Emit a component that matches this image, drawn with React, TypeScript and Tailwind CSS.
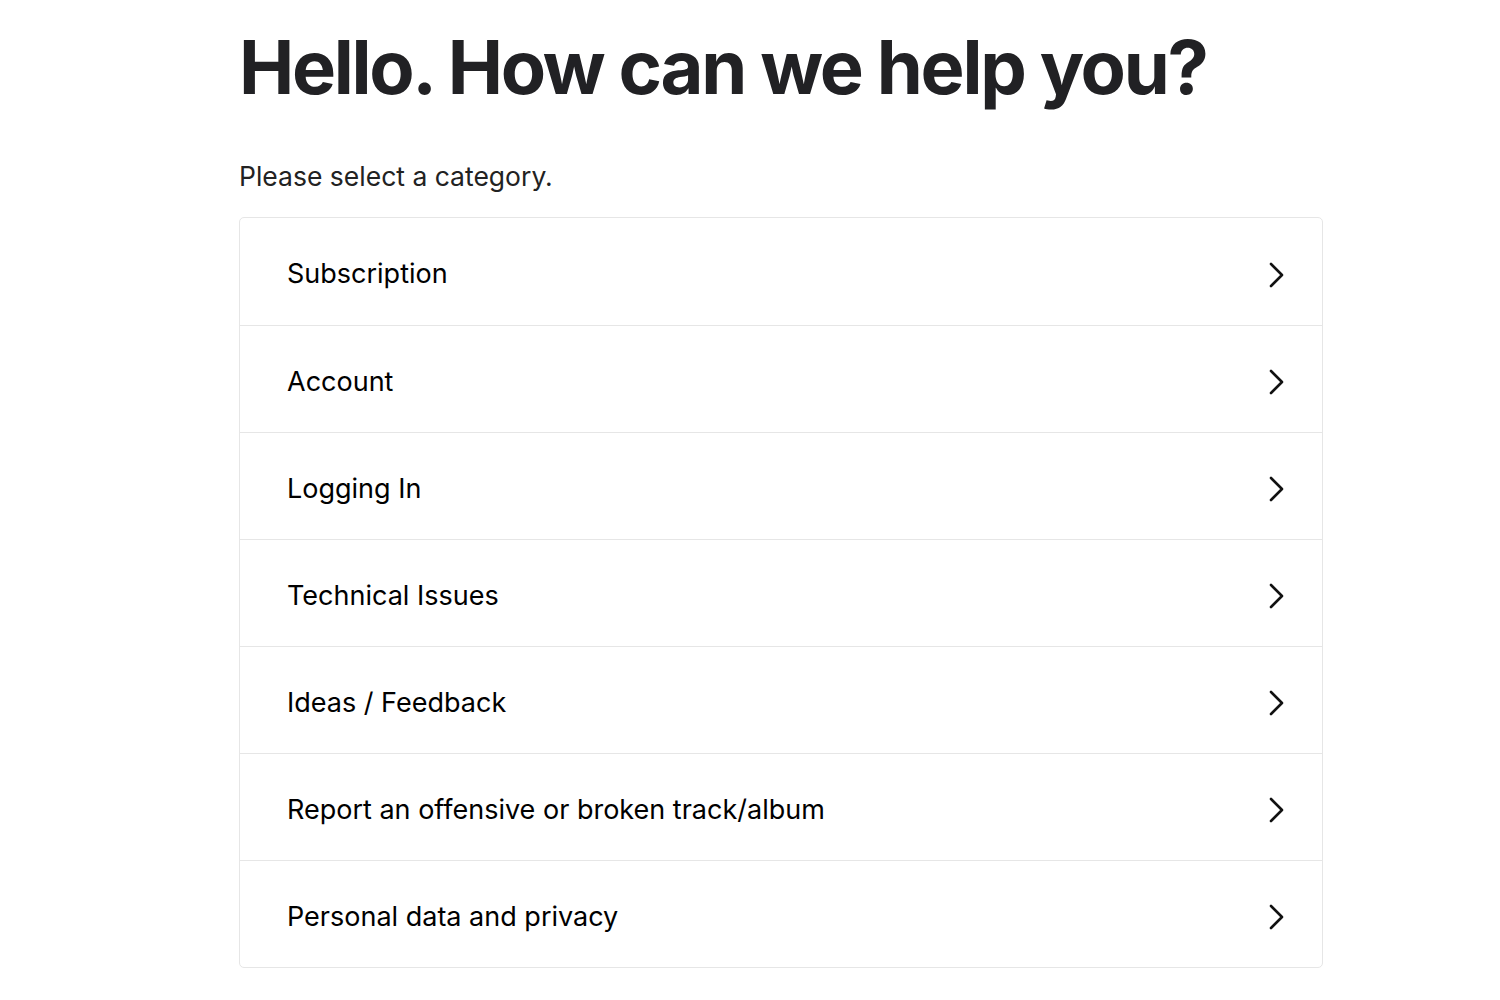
import React from "react";

const items = [
  "Subscription",
  "Account",
  "Logging In",
  "Technical Issues",
  "Ideas / Feedback",
  "Report an offensive or broken track/album",
  "Personal data and privacy",
];

function Chevron() {
  return (
    <svg width="18" height="26" viewBox="0 0 18 26" fill="none" className="shrink-0">
      <path d="M3 2 L14 13 L3 24" stroke="#111" strokeWidth="2.6" strokeLinecap="round" strokeLinejoin="round" />
    </svg>
  );
}

export default function App() {
  return (
    <div className="min-h-[1000px] bg-white" style={{ fontFamily: "Inter, 'Liberation Sans', sans-serif" }}>
      <div className="ml-[239px] w-[1084px] pt-[24px]">
        <h1 className="text-[74px] leading-[86px] font-bold tracking-[-2.3px] text-[#212124]">
          Hello. How can we help you?
        </h1>
        <p className="mt-[49px] text-[26.5px] leading-[34px] text-[#222]">Please select a category.</p>
        <div className="mt-[24px] rounded-[5px] border border-[#e6e6e6]">
          {items.map((t, i) => (
            <div
              key={t}
              className={`flex h-[107px] items-center justify-between pl-[47px] pr-[36px] pt-[6px] ${i > 0 ? "border-t border-[#e6e6e6]" : ""}`}
            >
              <span className="text-[27px] text-black">{t}</span>
              <Chevron />
            </div>
          ))}
        </div>
      </div>
    </div>
  );
}
